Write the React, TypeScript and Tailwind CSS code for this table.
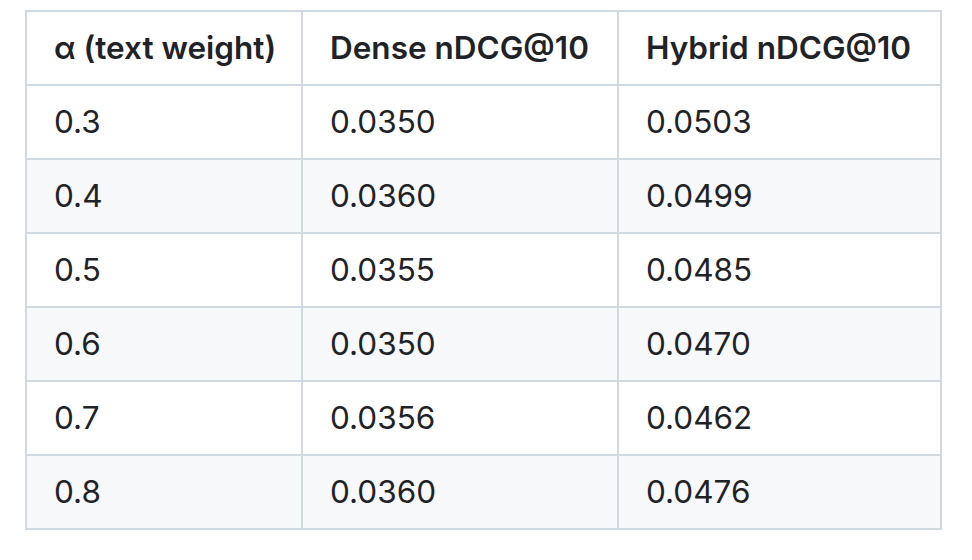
const headers = ["α (text weight)", "Dense nDCG@10", "Hybrid nDCG@10"];

const rows = [
  ["0.3", "0.0350", "0.0503"],
  ["0.4", "0.0360", "0.0499"],
  ["0.5", "0.0355", "0.0485"],
  ["0.6", "0.0350", "0.0470"],
  ["0.7", "0.0356", "0.0462"],
  ["0.8", "0.0360", "0.0476"],
];

const App = () => {
  return (
    <div className="bg-white w-[972px] h-[560px] pt-[10px] pl-[25px] font-['Inter',sans-serif] text-[#1f2328]">
      <div className="inline-grid grid-cols-[274px_314px_321px] gap-[2px] p-[2px] bg-[#d1d9e0]">
        {headers.map((h) => (
          <div key={h} className="bg-white h-[72px] flex items-center pl-[27px] whitespace-nowrap text-[31.5px] font-semibold">
            {h}
          </div>
        ))}
        {rows.map((r, i) =>
          r.map((c, j) => (
            <div
              key={`${i}-${j}`}
              className={`h-[72px] flex items-center pl-[27px] whitespace-nowrap text-[31.5px] ${i % 2 === 1 ? "bg-[#f6f8fa]" : "bg-white"}`}
            >
              {c}
            </div>
          ))
        )}
      </div>
    </div>
  );
};

export default App;
